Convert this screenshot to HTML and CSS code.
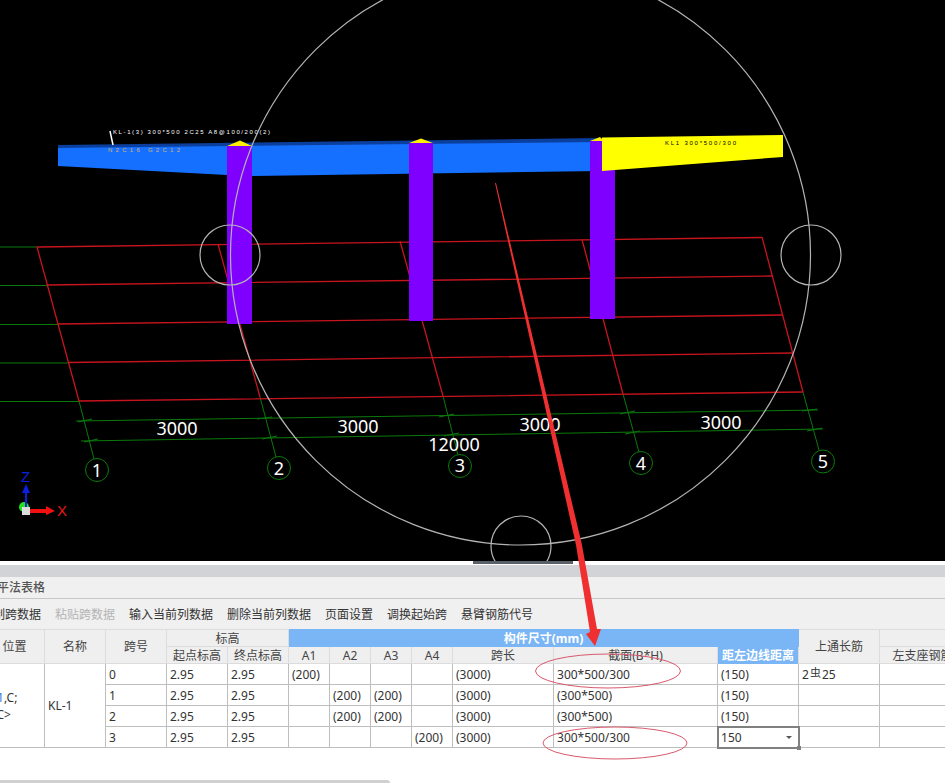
FILE: index.html
```html
<!DOCTYPE html>
<html lang="zh">

<head>
  <meta charset="UTF-8">
  <title>平法表格</title>
  <link rel="stylesheet" href="styles.css">
</head>

<body>
  <svg class="viewport" viewBox="0 0 945 561" xmlns="http://www.w3.org/2000/svg">
    <rect width="945" height="561" fill="#000"/>

    <!-- axis grid -->
    <g fill="none" stroke="#0b7a0b" stroke-width="1">
      <path d="M0 247H37M0 285.5H47M0 324.5H58M0 363H68M0 401.5H79"/>
      <path d="M79 401 94 459M260 397 276 457M443 396 458 455M623 394 639 452M803 392 819 450"/>
      <path d="M76 421 818 410M81 441 823 429"/>
      <path d="M78 422 92 419M84 442 98 439M257 419 272 417M262 439 277 436M439 417 454 414M444 436 459 433M620 414 635 411M625 434 640 431M802 411 817 409M807 431 822 428"/>
      <circle cx="97" cy="470" r="11.5"/>
      <circle cx="279" cy="468" r="11.5"/>
      <circle cx="460" cy="466" r="11.5"/>
      <circle cx="641" cy="463" r="11.5"/>
      <circle cx="823" cy="461.5" r="11.5"/>
    </g>
    <g fill="none" stroke="#c8141e" stroke-width="1.3">
      <path d="M37 247 762 237.5M47 285 772 276M58 324 783 315M68 362.5 793 353M79 401 803 392"/>
      <path d="M37 247 79 401M218 244 260 397M400 241 443 396M582 239.5 623 394M762 237 803 392"/>
    </g>

    <!-- beam -->
    <path d="M58 145 600 138V143L58 149Z" fill="#0a3f9e"/>
    <path d="M58 148 600 142V171L252 176 227 175 58 166Z" fill="#1570ff"/>
    <g fill="#8000ff">
      <rect x="227" y="146" width="25" height="178"/>
      <rect x="409" y="143" width="24" height="178"/>
      <rect x="590" y="141" width="25" height="178"/>
    </g>
    <g fill="#ffee00">
      <path d="M227 146 240 140.500 252 146Z"/>
      <path d="M409 143 421 138.500 433 143Z"/>
      <path d="M590 141 600 137 604 141Z"/>
    </g>
    <path d="M602 137.500 783 135V157L602 171Z" fill="#ffff00"/>
    <path d="M110 131 113 145" stroke="#fff" stroke-width="1.500"/>
    <text class="note" x="113" y="134" fill="#fff" textLength="157">KL-1(3) 300*500 2C25 A8@100/200(2)</text>
    <text class="note" x="108" y="152" fill="#d8b070" textLength="72">N2C16 G2C12</text>
    <text class="note" x="665" y="145" fill="#000" textLength="71">KL1 300*500/300</text>

    <!-- selection circles -->
    <g fill="none" stroke="#b4b4b4" stroke-width="1.200">
      <circle cx="520.500" cy="255" r="290"/>
      <circle cx="230" cy="255" r="30"/>
      <circle cx="811" cy="255" r="30"/>
      <circle cx="521" cy="546" r="30"/>
    </g>

    <!-- dimensions -->
    <g class="dim" fill="#fff" text-anchor="middle">
      <text x="177" y="435">3000</text>
      <text x="358" y="433">3000</text>
      <text x="540" y="431">3000</text>
      <text x="721" y="429">3000</text>
      <text x="454" y="451">12000</text>
      <text x="97" y="477">1</text>
      <text x="279" y="475">2</text>
      <text x="460" y="472">3</text>
      <text x="641" y="470">4</text>
      <text x="823" y="468">5</text>
    </g>

    <!-- axis marker -->
    <circle cx="24" cy="507" r="5" fill="#22e022"/>
    <path d="M25 507V493H22L26 484 30 493H27V507Z" fill="#0a1fe0"/>
    <path d="M30 509H46V506L55 511 46 515V513H30Z" fill="#f01010"/>
    <rect x="22" y="507" width="8" height="8" fill="#ddd"/>
    <text class="axis" x="21" y="482" fill="#0a1fe0">Z</text>
    <text class="axis" x="57" y="516" fill="#e81818">X</text>
  </svg>

  <div class="panel">
    <div class="splitter"><div class="handle"></div></div>
    <div class="band"></div>
    <div class="title">平法表格</div>
    <div class="toolbar">
      <span>复制跨数据</span>
      <span class="disabled">粘贴跨数据</span>
      <span>输入当前列数据</span>
      <span>删除当前列数据</span>
      <span>页面设置</span>
      <span>调换起始跨</span>
      <span>悬臂钢筋代号</span>
    </div>
    <table class="grid">
      <colgroup>
        <col class="c60"><col class="c61"><col class="c61"><col class="c61"><col class="c61">
        <col class="c41"><col class="c41"><col class="c41"><col class="c41">
        <col class="c101"><col class="c164"><col class="c81"><col class="c81"><col class="c86"><col class="c100">
      </colgroup>
      <thead>
        <tr>
          <th rowspan="2">位置</th>
          <th rowspan="2">名称</th>
          <th rowspan="2">跨号</th>
          <th colspan="2">标高</th>
          <th colspan="7" class="blue">构件尺寸(mm)</th>
          <th rowspan="2">上通长筋</th>
          <th colspan="2"></th>
        </tr>
        <tr>
          <th>起点标高</th>
          <th>终点标高</th>
          <th>A1</th>
          <th>A2</th>
          <th>A3</th>
          <th>A4</th>
          <th>跨长</th>
          <th>截面(B*H)</th>
          <th class="blue">距左边线距离</th>
          <th>左支座钢筋</th>
          <th></th>
        </tr>
      </thead>
      <tbody>
        <tr>
          <td rowspan="4" class="place">4,<i>1</i>,C;<br>4,C&gt;</td>
          <td rowspan="4">KL-1</td>
          <td>0</td><td>2.95</td><td>2.95</td>
          <td>(200)</td><td></td><td></td><td></td>
          <td>(3000)</td><td>300*500/300</td><td>(150)</td>
          <td>2<span class="rebar">虫</span>25</td><td></td><td></td>
        </tr>
        <tr>
          <td>1</td><td>2.95</td><td>2.95</td>
          <td></td><td>(200)</td><td>(200)</td><td></td>
          <td>(3000)</td><td>(300*500)</td><td>(150)</td>
          <td></td><td></td><td></td>
        </tr>
        <tr>
          <td>2</td><td>2.95</td><td>2.95</td>
          <td></td><td>(200)</td><td>(200)</td><td></td>
          <td>(3000)</td><td>(300*500)</td><td>(150)</td>
          <td></td><td></td><td></td>
        </tr>
        <tr>
          <td>3</td><td>2.95</td><td>2.95</td>
          <td></td><td></td><td></td><td>(200)</td>
          <td>(3000)</td><td>300*500/300</td>
          <td class="editing">150<span class="caret"></span><span class="grip"></span></td>
          <td></td><td></td><td></td>
        </tr>
      </tbody>
    </table>
    <div class="scrollbar"></div>
  </div>

  <!-- markup drawn on top of the screenshot -->
  <svg class="markup" viewBox="0 0 945 783" xmlns="http://www.w3.org/2000/svg">
    <path d="M495 183 496 183 582 545 597 629 601 629 595 646 586 634 590 632 576 545Z" fill="#f03030"/>
    <g fill="none" stroke="#d9596c" stroke-width="1">
      <ellipse cx="608" cy="671" rx="72.500" ry="17"/>
      <ellipse cx="615" cy="743" rx="72" ry="16"/>
    </g>
  </svg>
</body>

</html>
```

FILE: styles.css
```css
html {
    box-sizing: border-box;
    font-family: 'Noto Sans', 'Noto Sans CJK SC', sans-serif;
    font-size: 12px;
}

*, ::before, ::after {
    box-sizing: inherit;
}

body {
    position: relative;
    width: 945px;
    height: 783px;
    margin: 0;
    overflow: hidden;
    background-color: #fff;
    color: #333;
}

/* 3D VIEW */

.viewport {
    display: block;
    width: 945px;
    height: 561px;
}

.viewport .dim {
    font-family: 'Noto Sans', sans-serif;
    font-size: 18px;
}

.viewport .note {
    font-family: 'Liberation Sans', sans-serif;
    font-size: 6px;
}

.viewport .axis {
    font-family: 'Liberation Sans', sans-serif;
    font-size: 15px;
}

/* PANEL */

.panel {
    height: 222px;
    overflow: hidden;
}

.splitter {
    height: 4px;
    padding-left: 473px;
    background-color: #fff;
}

.handle {
    width: 100px;
    height: 3px;
    background-color: #5a6068;
}

.band {
    height: 12px;
    background-color: #d2d3d7;
}

.title {
    width: 948px;
    height: 22px;
    margin-left: -3px;
    border-bottom: 1px solid #c8c8c8;
    background-color: #f0f0f0;
    line-height: 21px;
    font-weight: 500;
    color: #555;
}

.toolbar {
    display: flex;
    gap: 14px;
    align-items: center;
    height: 30px;
    margin-left: -19px;
    background-color: #f0f0f0;
    white-space: nowrap;
}

.toolbar .disabled {
    color: #b4b4b4;
}

/* TABLE */

.grid {
    width: 1026px;
    margin-left: -16px;
    border-collapse: collapse;
    table-layout: fixed;
}

.c41 { width: 41px; }
.c60 { width: 60px; }
.c61 { width: 61px; }
.c81 { width: 81px; }
.c86 { width: 86px; }
.c100 { width: 100px; }
.c101 { width: 101px; }
.c164 { width: 164px; }

.grid th {
    height: 17px;
    padding: 0;
    border: 1px solid #dcdcdc;
    background-color: #efefef;
    font-weight: 400;
    line-height: 15px;
    color: #444;
}

.grid th.blue {
    border-color: #7ab5f5;
    background-color: #7ab5f5;
    font-weight: 700;
    color: #fff;
}

.grid td {
    height: 21px;
    padding: 0 3px;
    border: 1px solid #bebebe;
    line-height: 15px;
    white-space: nowrap;
}

.grid .place {
    padding-left: 2px;
    line-height: 17px;
}

.place i {
    font-style: normal;
    color: #2a7de1;
}

.rebar {
    position: relative;
    top: -2px;
    margin: 0 1px;
    font-size: 11px;
}

.editing {
    position: relative;
    outline: 2px solid #808080;
    outline-offset: -1px;
}

.caret {
    position: absolute;
    top: 9px;
    right: 6px;
    border-top: 3px solid #555;
    border-left: 3px solid transparent;
    border-right: 3px solid transparent;
}

.grip {
    position: absolute;
    right: -3px;
    bottom: -3px;
    width: 4px;
    height: 4px;
    background-color: #808080;
}

.scrollbar {
    width: 390px;
    height: 4px;
    margin-top: 32px;
    border-top-right-radius: 3px;
    background-color: #d0d0d0;
}

/* MARKUP OVERLAY */

.markup {
    position: absolute;
    top: 0;
    left: 0;
    width: 945px;
    height: 783px;
    pointer-events: none;
}
```
